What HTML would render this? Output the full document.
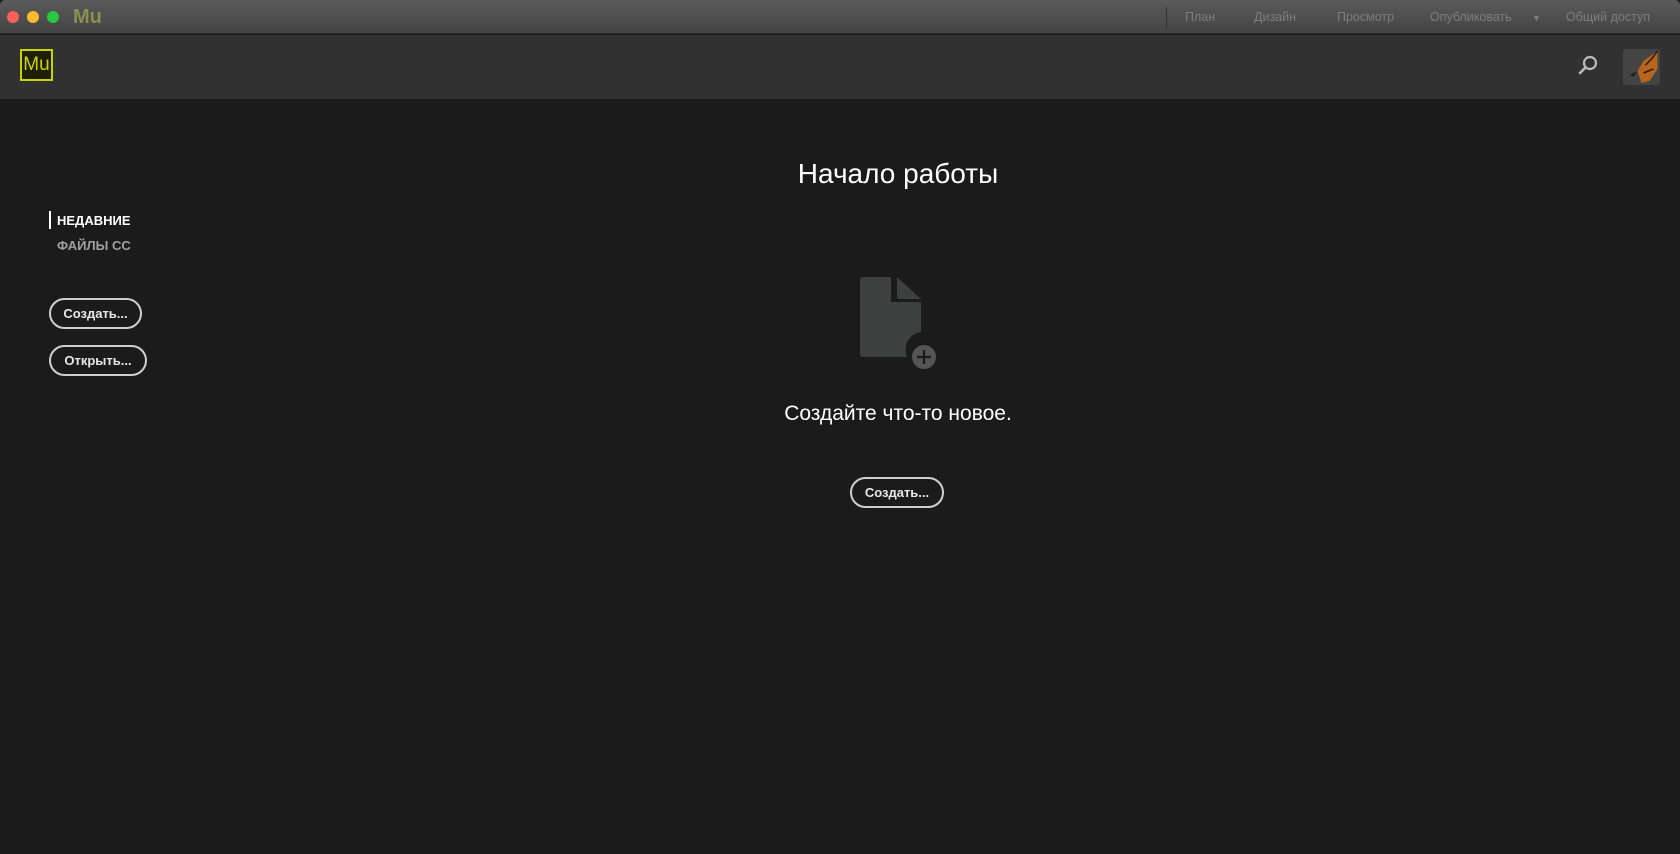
<!DOCTYPE html>
<html><head><meta charset="utf-8"><style>
*{margin:0;padding:0;box-sizing:border-box}
body{width:1680px;height:854px;background:#1b1b1b;font-family:"Liberation Sans","DejaVu Sans",sans-serif;position:relative;overflow:hidden}
.tb{position:absolute;left:0;top:0;width:1680px;height:34px;background:linear-gradient(#5a5a5a,#444);border-bottom:1px solid #2a2a2a;border-radius:5px 5px 0 0}
.dot{position:absolute;top:11px;width:12px;height:12px;border-radius:50%}
.tbmu{position:absolute;left:73px;top:6px;font-size:20px;color:#8c8f52;font-weight:bold}
.nav{position:absolute;top:10px;font-size:12.5px;color:#7d7d7d}
.sep{position:absolute;left:1166px;top:7px;width:1px;height:22px;background:#333}
.hd{position:absolute;left:0;top:35px;width:1680px;height:64px;background:#313131}
.logo{position:absolute;left:20px;top:49px;width:33px;height:32px;border:2px solid #c8d400;background:#201f00;color:#c8d400;font-size:19px;text-align:center;line-height:28px}
.abs{position:absolute}
.btn{position:absolute;border:2px solid #cfcfcf;border-radius:16px;color:#e8e8e8;font-weight:bold;font-size:13px;text-align:center;line-height:27px;height:31px}
</style></head><body>
<div class="tb"></div>
<div class="dot" style="left:7px;background:#fc5f57"></div>
<div class="dot" style="left:27px;background:#fdbc2e"></div>
<div class="dot" style="left:47px;background:#28c840"></div>
<div class="tbmu">Mu</div>
<div class="sep"></div>
<div class="nav" style="left:1185px">План</div>
<div class="nav" style="left:1254px">Дизайн</div>
<div class="nav" style="left:1337px">Просмотр</div>
<div class="nav" style="left:1430px">Опубликовать</div>
<div class="nav" style="left:1532px;font-size:9px;top:13px">▼</div>
<div class="nav" style="left:1566px">Общий доступ</div>
<div class="hd"></div>
<div class="logo">Mu</div>
<svg class="abs" style="left:1576px;top:54px" width="24" height="24" viewBox="0 0 24 24"><circle cx="14" cy="9" r="6" fill="none" stroke="#bbb" stroke-width="2.2"/><line x1="9.5" y1="13.5" x2="4" y2="19" stroke="#bbb" stroke-width="2.6" stroke-linecap="round"/></svg>
<div class="abs" style="left:1623px;top:49px;width:37px;height:36px;background:#444;border-radius:3px;overflow:hidden">
<svg width="37" height="36" viewBox="0 0 36 36"><path d="M34 2 L20 12 L14 22 L18 34 L26 32 L34 20Z" fill="#b7651c"/><path d="M34 2 L28 10 L22 16 M30 20 L20 24" stroke="#2a1a08" stroke-width="1.5" fill="none"/><path d="M14 22 L6 26 L10 28Z" fill="#222"/></svg></div>
<div class="abs" style="left:49px;top:211px;width:2px;height:18px;background:#fff"></div>
<div class="abs" style="left:57px;top:213px;font-size:13px;font-weight:bold;color:#fff">НЕДАВНИЕ</div>
<div class="abs" style="left:57px;top:238px;font-size:13px;font-weight:bold;color:#a0a0a0">ФАЙЛЫ СС</div>
<div class="btn" style="left:49px;top:298px;width:93px">Создать...</div>
<div class="btn" style="left:49px;top:345px;width:98px">Открыть...</div>
<div class="abs" style="left:0;width:1796px;top:158px;text-align:center;font-size:28px;color:#fff">Начало работы</div>
<svg class="abs" style="left:855px;top:272px" width="90" height="100" viewBox="0 0 90 100">
<path d="M8 5 H36 V30 H66 V60 A18 18 0 0 0 52 85 H8 A3 3 0 0 1 5 82 V8 A3 3 0 0 1 8 5Z" fill="#3e4040"/>
<path d="M42 5 L66 27 H44 A2 2 0 0 1 42 25Z" fill="#3e4040"/>
<circle cx="69" cy="85" r="12" fill="#555"/>
<path d="M69 78 V92 M62 85 H76" stroke="#1b1b1b" stroke-width="2.3"/>
</svg>
<div class="abs" style="left:0;width:1796px;top:402px;text-align:center;font-size:21px;color:#fff">Создайте что-то новое.</div>
<div class="btn" style="left:850px;top:477px;width:94px">Создать...</div>
</body></html>
